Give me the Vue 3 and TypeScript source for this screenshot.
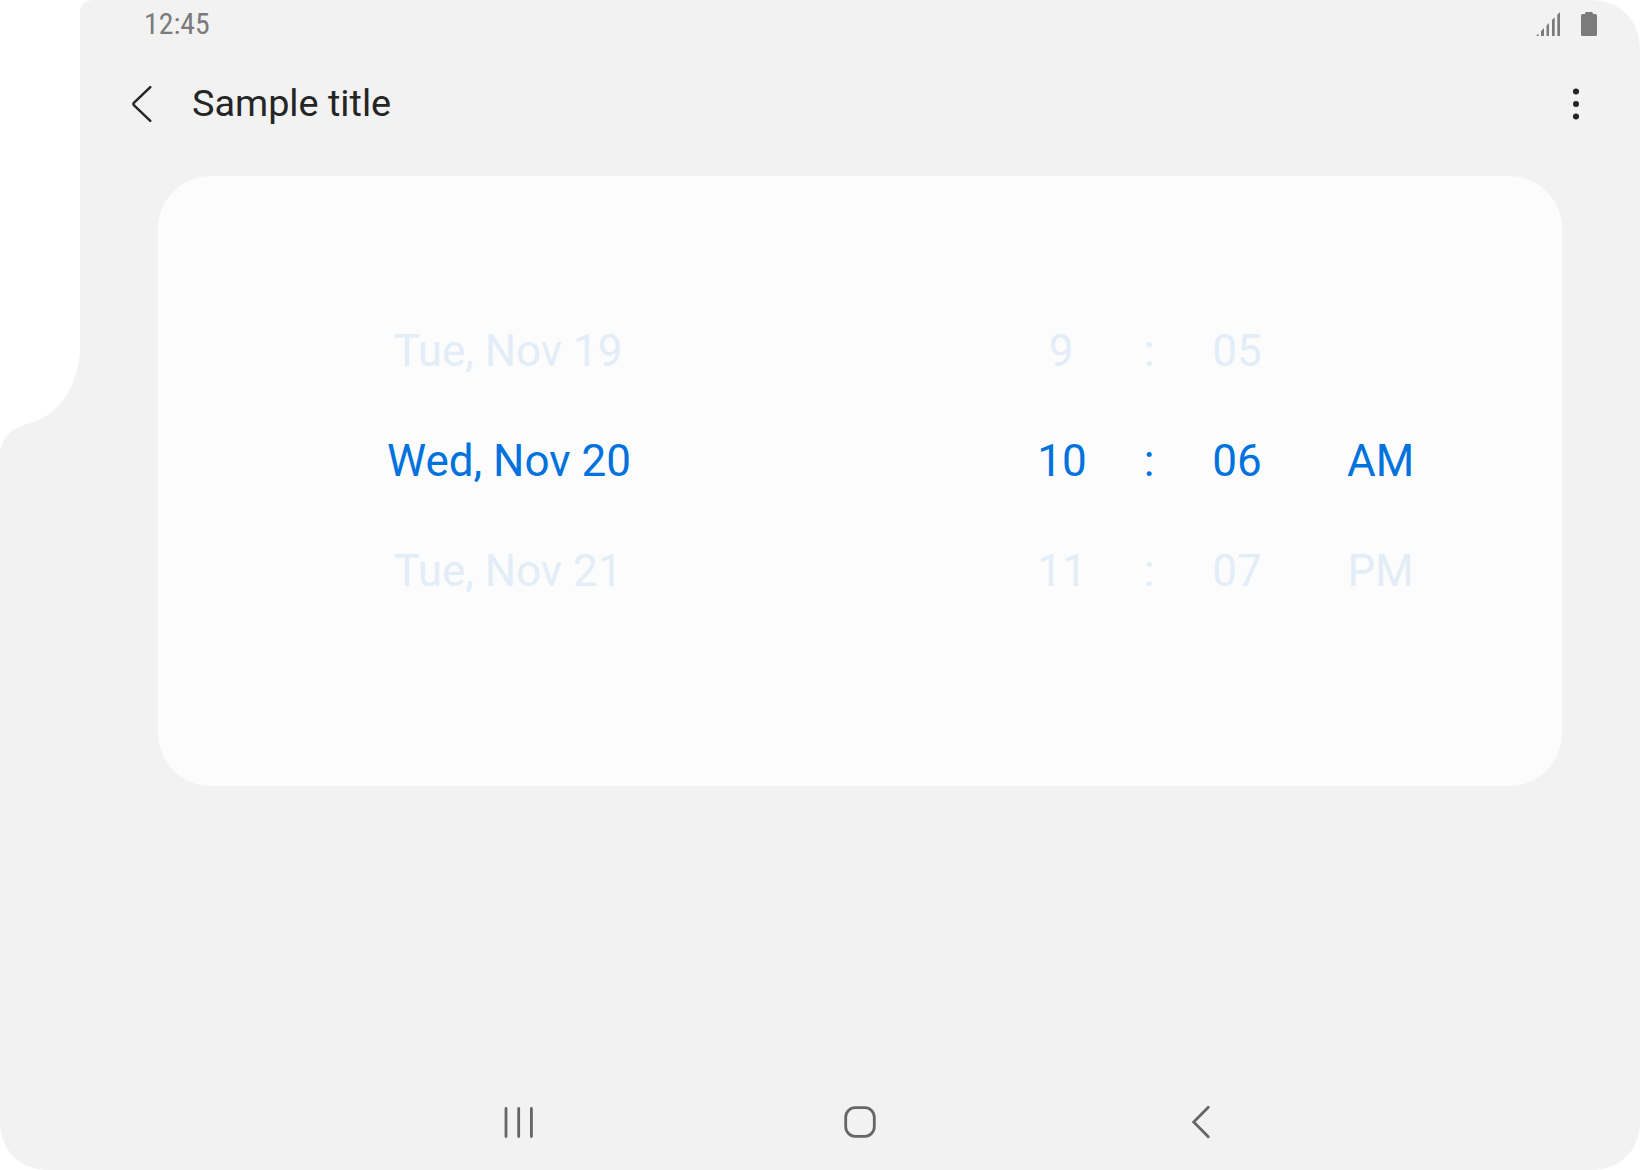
<script setup lang="ts">
interface Wheel {
  name: string
  values: string[]
}

const wheels: Wheel[] = [
  { name: 'date', values: ['Tue, Nov 19', 'Wed, Nov 20', 'Tue, Nov 21'] },
  { name: 'hour', values: ['9', '10', '11'] },
  { name: 'colon', values: [':', ':', ':'] },
  { name: 'minute', values: ['05', '06', '07'] },
  { name: 'period', values: ['', 'AM', 'PM'] },
]
</script>

<template>
  <div class="device">
    <header class="status">
      <span class="clock">12:45</span>
      <span class="indicators">
        <svg class="signal" width="24" height="24" viewBox="0 0 24 24">
          <path d="M0 24L2.5 21.5V24ZM5 24V19L8 16V24ZM10.5 24V13.500L13 11V24ZM16 24V8L18.700 5.300V24ZM21.300 24V2.700L24 0V24Z" />
        </svg>
        <svg class="battery" width="16" height="24" viewBox="0 0 16 24">
          <path d="M5 0H11Q12 0 12 2H14.500Q16 2 16 3.500V22.500Q16 24 14.500 24H1.500Q0 24 0 22.500V3.500Q0 2 1.500 2H4Q4 0 5 0Z" />
        </svg>
      </span>
    </header>

    <div class="toolbar">
      <svg class="back" width="24" height="40" viewBox="0 0 24 40">
        <path d="M20.300 3.200L4.100 18.700Q2.700 20 4.100 21.300L20.300 36.800" />
      </svg>
      <h1 class="title">Sample title</h1>
      <svg class="more" width="8" height="32" viewBox="0 0 8 32">
        <circle cx="4" cy="3.500" r="3.050" />
        <circle cx="4" cy="16" r="3.050" />
        <circle cx="4" cy="28.500" r="3.050" />
      </svg>
    </div>

    <main class="card">
      <div v-for="wheel in wheels" :key="wheel.name" class="wheel" :class="wheel.name">
        <div
          v-for="(value, index) in wheel.values"
          :key="index"
          class="value"
          :class="{ selected: index === 1 }"
        >{{ value }}</div>
      </div>
    </main>

    <nav class="navigation">
      <svg width="36" height="36" viewBox="0 0 36 36">
        <path d="M5 4.500V32.500M17.700 4.500V32.500M30.400 4.500V32.500" />
      </svg>
      <svg width="36" height="36" viewBox="0 0 36 36">
        <rect x="3.700" y="3.700" width="28.600" height="28.600" rx="9.500" />
      </svg>
      <svg width="36" height="36" viewBox="0 0 36 36">
        <path d="M25.300 3.300L10.700 18L25.300 32.700" />
      </svg>
    </nav>
  </div>
</template>

<style>
body {
  margin: 0;
  background: #fff;
}
</style>

<style scoped>
.device {
  box-sizing: border-box;
  display: flex;
  flex-direction: column;
  width: 1640px;
  height: 1170px;
  background: #f2f2f2;
  color: #252525;
  font-family: Roboto, sans-serif;
  clip-path: path('M94 0H1590C1620 0 1640 20 1640 50V1122C1640 1150 1620 1170 1592 1170H48C20 1170 0 1150 0 1122V455C0 440 10 428 27.700 424C59 416 80 385 80 345V14C80 5 85 0 94 0Z');
}

.status {
  display: flex;
  align-items: center;
  justify-content: space-between;
  height: 48px;
  padding: 0 43px 0 144px;
}

.clock {
  color: #7b7b7b;
  font-family: 'Roboto Condensed', Roboto, sans-serif;
  font-size: 29.800px;
  font-stretch: 75%;
  line-height: 48px;
}

.indicators {
  display: flex;
  gap: 21px;
  fill: #7b7b7b;
}

.toolbar {
  display: flex;
  align-items: center;
  height: 112px;
  padding: 0 60px 0 130px;
}

.back {
  fill: none;
  stroke: #252525;
  stroke-width: 2.5;
  stroke-linecap: round;
}

.title {
  flex: 1;
  margin: 0 0 2px 38px;
  font-size: 37.800px;
  font-weight: 400;
  line-height: 48px;
}

.more {
  fill: #252525;
}

.card {
  box-sizing: border-box;
  display: flex;
  height: 610px;
  margin: 16px 78px 0 158px;
  padding-top: 120px;
  border-radius: 53px;
  background: #fcfcfc;
}

.wheel {
  text-align: center;
  white-space: nowrap;
}

.date {
  width: 702px;
}

.date .value:not(.selected) {
  padding-right: 2px;
  letter-spacing: -0.05px;
}

.hour {
  width: 88px;
  margin-left: 158px;
}

.hour .value:first-child {
  padding-right: 2px;
}

.colon {
  width: 86px;
}

.minute {
  width: 90px;
}

.period {
  width: 197px;
}

.value {
  height: 110px;
  color: #e3edf8;
  font-size: 44px;
  line-height: 110px;
}

.selected {
  color: #0072de;
}

.navigation {
  display: flex;
  gap: 305px;
  margin: auto 0 30px 501px;
  fill: none;
  stroke: #666;
  stroke-width: 2.8;
  stroke-linecap: round;
}
</style>
